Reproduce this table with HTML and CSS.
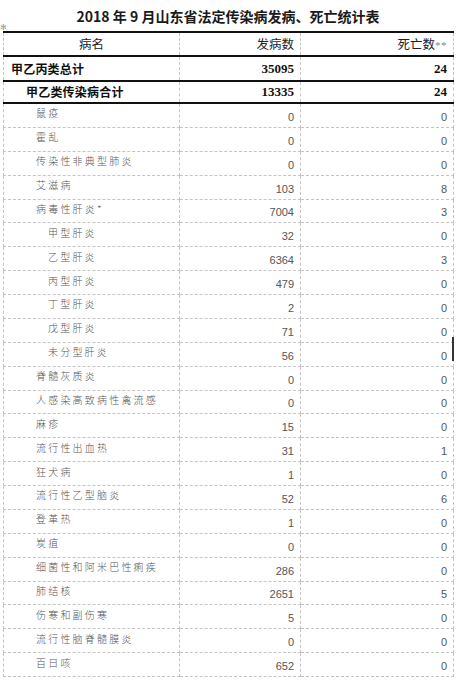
FILE: index.html
```html
<!DOCTYPE html>
<html lang="zh">
<head>
<meta charset="utf-8">
<title>2018年9月山东省法定传染病发病、死亡统计表</title>
<link rel="stylesheet" href="styles.css">
</head>
<body>
<div class="page">
  <h1 class="title">2018 年 9 月山东省法定传染病发病、死亡统计表</h1>
  <div class="wrap">
    <span class="mark">✻</span>
    <table class="stats">
      <colgroup><col class="c1"><col class="c2"><col class="c3"></colgroup>
      <thead>
        <tr class="head"><th class="hname">病名</th><th class="hnum">发病数</th><th class="hnum">死亡数<span class="stars">**</span></th></tr>
      </thead>
      <tbody>
        <tr class="total r1"><td class="tname">甲乙丙类总计</td><td class="tnum">35095</td><td class="tnum">24</td></tr>
        <tr class="total r2"><td class="tname sub">甲乙类传染病合计</td><td class="tnum">13335</td><td class="tnum">24</td></tr>
        <tr class="row"><td class="name">鼠疫</td><td class="num">0</td><td class="num">0</td></tr>
        <tr class="row"><td class="name">霍乱</td><td class="num">0</td><td class="num">0</td></tr>
        <tr class="row"><td class="name">传染性非典型肺炎</td><td class="num">0</td><td class="num">0</td></tr>
        <tr class="row"><td class="name">艾滋病</td><td class="num">103</td><td class="num">8</td></tr>
        <tr class="row"><td class="name">病毒性肝炎*</td><td class="num">7004</td><td class="num">3</td></tr>
        <tr class="row"><td class="name indent">甲型肝炎</td><td class="num">32</td><td class="num">0</td></tr>
        <tr class="row"><td class="name indent">乙型肝炎</td><td class="num">6364</td><td class="num">3</td></tr>
        <tr class="row"><td class="name indent">丙型肝炎</td><td class="num">479</td><td class="num">0</td></tr>
        <tr class="row"><td class="name indent">丁型肝炎</td><td class="num">2</td><td class="num">0</td></tr>
        <tr class="row"><td class="name indent">戊型肝炎</td><td class="num">71</td><td class="num">0</td></tr>
        <tr class="row"><td class="name indent">未分型肝炎</td><td class="num">56</td><td class="num">0</td></tr>
        <tr class="row"><td class="name">脊髓灰质炎</td><td class="num">0</td><td class="num">0</td></tr>
        <tr class="row"><td class="name">人感染高致病性禽流感</td><td class="num">0</td><td class="num">0</td></tr>
        <tr class="row"><td class="name">麻疹</td><td class="num">15</td><td class="num">0</td></tr>
        <tr class="row"><td class="name">流行性出血热</td><td class="num">31</td><td class="num">1</td></tr>
        <tr class="row"><td class="name">狂犬病</td><td class="num">1</td><td class="num">0</td></tr>
        <tr class="row"><td class="name">流行性乙型脑炎</td><td class="num">52</td><td class="num">6</td></tr>
        <tr class="row"><td class="name">登革热</td><td class="num">1</td><td class="num">0</td></tr>
        <tr class="row"><td class="name">炭疽</td><td class="num">0</td><td class="num">0</td></tr>
        <tr class="row"><td class="name">细菌性和阿米巴性痢疾</td><td class="num">286</td><td class="num">0</td></tr>
        <tr class="row"><td class="name">肺结核</td><td class="num">2651</td><td class="num">5</td></tr>
        <tr class="row"><td class="name">伤寒和副伤寒</td><td class="num">5</td><td class="num">0</td></tr>
        <tr class="row"><td class="name">流行性脑脊髓膜炎</td><td class="num">0</td><td class="num">0</td></tr>
        <tr class="row"><td class="name">百日咳</td><td class="num">652</td><td class="num">0</td></tr>
      </tbody>
    </table>
    <span class="edge"></span>
  </div>
</div>
</body>
</html>
```

FILE: styles.css
```css
html, body {
  margin: 0;
  padding: 0;
  background: #ffffff;
}

.page {
  width: 456px;
  height: 680px;
  overflow: hidden;
  font-family: "Noto Sans CJK SC", "Noto Sans", sans-serif;
  color: #222;
}

.title {
  margin: 0;
  height: 31px;
  padding-top: 1px;
  box-sizing: border-box;
  text-align: center;
  font-size: 14px;
  font-weight: 700;
  line-height: 30px;
  color: #1a1a1a;
}

.wrap {
  position: relative;
  padding-left: 3px;
}

.mark {
  position: absolute;
  left: 0;
  top: -8px;
  font-size: 8px;
  line-height: 8px;
  color: #999;
}

.edge {
  position: absolute;
  left: 452px;
  top: 306px;
  width: 2px;
  height: 24px;
  background: #333;
}

.stats {
  border-collapse: collapse;
  table-layout: fixed;
  width: 450px;
}

.c1 { width: 176px; }
.c2 { width: 121px; }
.c3 { width: 153px; }

.stats td, .stats th {
  padding: 0;
  border-left: 1px dashed #c4c4c4;
  border-right: 1px dashed #c4c4c4;
  border-bottom: 1px dashed #c4c4c4;
  white-space: nowrap;
  overflow: hidden;
  line-height: 14px;
}

.head th {
  height: 22px;
  border-top: 2px solid #111;
  border-bottom: 2px solid #111;
  font-size: 12.5px;
  font-weight: 400;
  color: #222;
  vertical-align: middle;
}

.hname {
  text-align: center;
}

.hnum {
  text-align: right;
  padding-right: 6px !important;
}

.stars {
  color: #888;
  font-family: "Liberation Serif", serif;
  font-size: 11px;
  letter-spacing: 0.5px;
}

.total td {
  border-bottom: 2px solid #111;
  vertical-align: middle;
}

.r1 td { height: 23px; }
.r2 td { height: 20px; }

.tname {
  padding-left: 7px !important;
  font-size: 12px;
  font-weight: 700;
  color: #111;
  letter-spacing: 0.2px;
}

.tname.sub {
  padding-left: 22px !important;
}

.tnum {
  text-align: right;
  padding-right: 6px !important;
  font-family: "Liberation Serif", serif;
  font-weight: 700;
  font-size: 13px;
  color: #111;
}

.row td {
  height: 18.875px;
  vertical-align: middle;
}

.name {
  padding-left: 32px !important;
  padding-bottom: 4px !important;
  font-size: 10px;
  letter-spacing: 2.2px;
  color: #555;
  font-weight: 300;
}

.name.indent {
  padding-left: 44px !important;
}

.num {
  text-align: right;
  padding-right: 6px !important;
  padding-top: 3px !important;
  font-family: "Liberation Sans", "DejaVu Sans", sans-serif;
  font-size: 11px;
  color: #555;
}
```
